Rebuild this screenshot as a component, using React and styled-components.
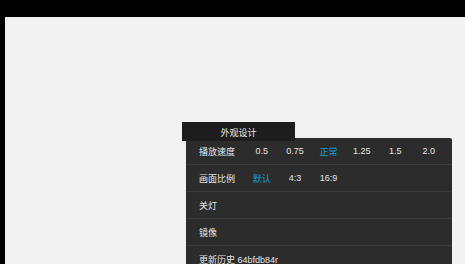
import React from 'react';
import styled, { createGlobalStyle } from 'styled-components';

const GlobalStyle = createGlobalStyle`
  html, body {
    margin: 0;
    padding: 0;
    background: #000;
  }
  body {
    font-family: 'Liberation Sans', 'Noto Sans CJK SC', sans-serif;
  }
`;

const Page = styled.div`
  width: 465px;
  height: 264px;
  box-sizing: border-box;
  padding: 17px 0 0 5px;
  background: #000;
  overflow: hidden;
`;

const Stage = styled.div`
  height: 100%;
  background: #f2f2f2;
  box-sizing: border-box;
  padding: 105px 0 0 177px;
`;

const Menu = styled.div`
  display: flex;
  flex-direction: column;
  align-items: flex-start;
`;

const Tab = styled.div`
  position: relative;
  z-index: 1;
  width: 113px;
  height: 19px;
  margin-bottom: -3px;
  padding-top: 2px;
  background: #1d1d1d;
  color: #ececec;
  font-size: 9px;
  display: flex;
  align-items: center;
  justify-content: center;
  box-sizing: border-box;
`;

const Panel = styled.div`
  margin-left: 4px;
  width: 266px;
  background: #2c2c2c;
  border-top-right-radius: 2px;
  display: flex;
  flex-direction: column;
`;

const Row = styled.div`
  height: 26px;
  border-bottom: 1px solid #3a3a3a;
  display: flex;
  align-items: center;
  padding-left: 13px;
  color: #e6e6e6;
  font-size: 9px;
  &:last-child {
    border-bottom: none;
  }
`;

const Label = styled.span`
  width: 46px;
  flex-shrink: 0;
`;

const Option = styled.span`
  width: 33.4px;
  text-align: center;
  color: ${p => (p.active ? '#13a0d2' : '#e6e6e6')};
`;

const speeds = ['0.5', '0.75', '正常', '1.25', '1.5', '2.0'];
const ratios = ['默认', '4:3', '16:9'];

export default function App() {
  return (
    <>
      <GlobalStyle />
      <Page>
        <Stage>
          <Menu>
            <Tab>外观设计</Tab>
            <Panel>
              <Row>
                <Label>播放速度</Label>
                {speeds.map(s => (
                  <Option key={s} active={s === '正常'}>
                    {s}
                  </Option>
                ))}
              </Row>
              <Row>
                <Label>画面比例</Label>
                {ratios.map(r => (
                  <Option key={r} active={r === '默认'}>
                    {r}
                  </Option>
                ))}
              </Row>
              <Row>关灯</Row>
              <Row>镜像</Row>
              <Row>更新历史 64bfdb84r</Row>
            </Panel>
          </Menu>
        </Stage>
      </Page>
    </>
  );
}
